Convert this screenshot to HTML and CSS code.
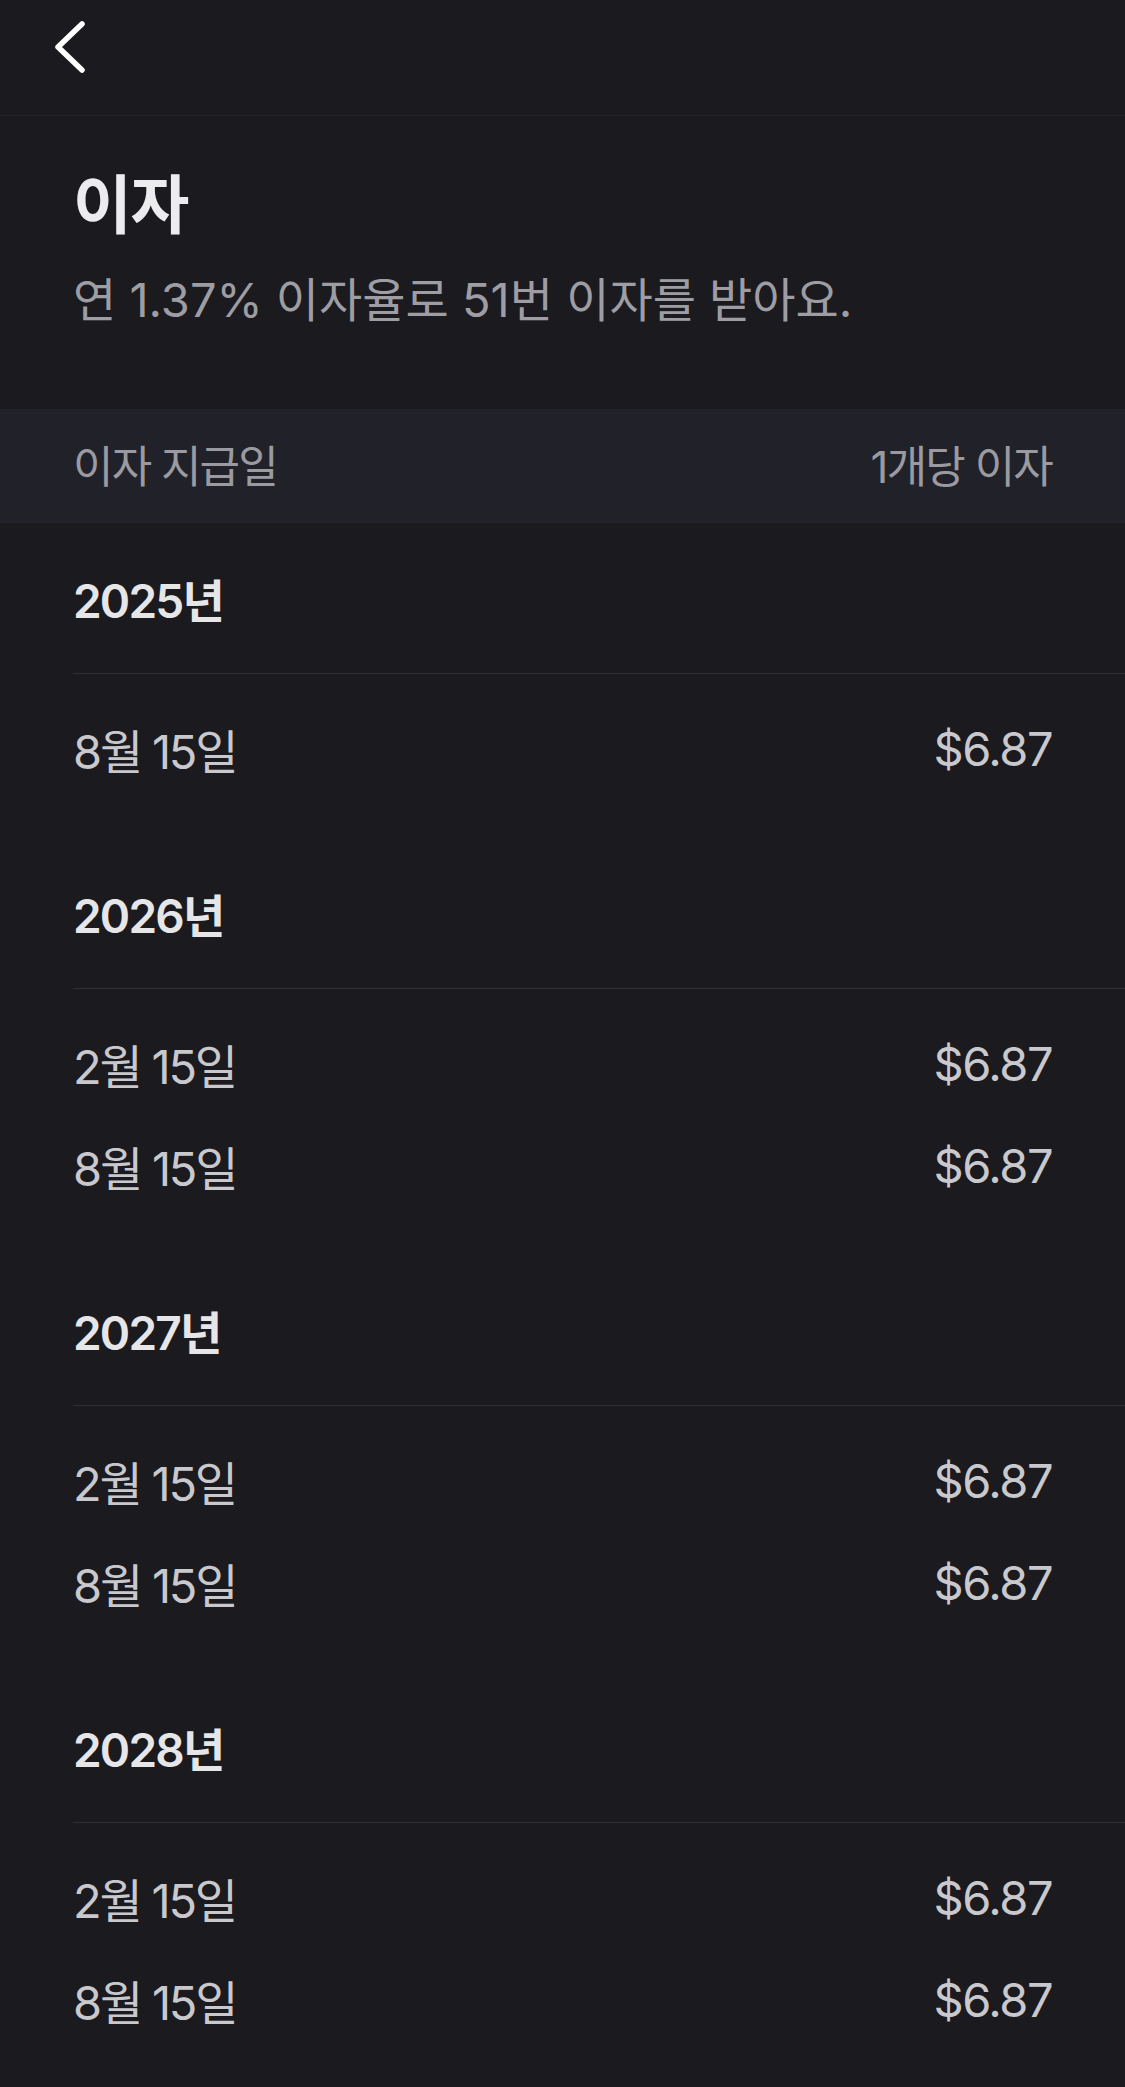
FILE: index.html
```html
<!DOCTYPE html>
<html lang="ko">

<head>
    <meta charset="UTF-8">
    <meta name="viewport" content="width=device-width, initial-scale=1.0">
    <title>이자</title>
    <link rel="stylesheet" href="styles.css">
</head>

<body>
    <header class="topBar">
        <button class="backBtn" aria-label="뒤로">
            <svg width="40" height="60" viewBox="0 0 40 60">
                <path d="M31 7 L7 30 L31 53" fill="none" stroke="#fff" stroke-width="5.5" stroke-linecap="round" stroke-linejoin="round" />
            </svg>
        </button>
    </header>

    <div class="intro">
        <h1 class="title">이자</h1>
        <p class="subtitle">연 1.37% 이자율로 51번 이자를 받아요.</p>
    </div>

    <div class="tableHead">
        <span>이자 지급일</span>
        <span>1개당 이자</span>
    </div>

    <section class="yearBlock">
        <h2 class="year">2025년</h2>
        <ul class="payList">
            <li><span class="date">8월 15일</span><span>$6.87</span></li>
        </ul>
    </section>

    <section class="yearBlock">
        <h2 class="year">2026년</h2>
        <ul class="payList">
            <li><span class="date">2월 15일</span><span>$6.87</span></li>
            <li><span class="date">8월 15일</span><span>$6.87</span></li>
        </ul>
    </section>

    <section class="yearBlock">
        <h2 class="year">2027년</h2>
        <ul class="payList">
            <li><span class="date">2월 15일</span><span>$6.87</span></li>
            <li><span class="date">8월 15일</span><span>$6.87</span></li>
        </ul>
    </section>

    <section class="yearBlock">
        <h2 class="year">2028년</h2>
        <ul class="payList">
            <li><span class="date">2월 15일</span><span>$6.87</span></li>
            <li><span class="date">8월 15일</span><span>$6.87</span></li>
        </ul>
    </section>
</body>

</html>
```

FILE: styles.css
```css
* {
    margin: 0;
    padding: 0;
    box-sizing: border-box;
}

html,
body {
    background-color: #1a1a1f;
}

body {
    font-family: "Inter", "Noto Sans CJK KR", sans-serif;
    color: #e8e8ea;
    width: 1125px;
    overflow: hidden;
}

/* top navigation */
.topBar {
    height: 116px;
    border-bottom: 1px solid #24242a;
    display: flex;
    align-items: flex-start;
    padding: 17px 0 0 51px;
}

.backBtn {
    background: none;
    border: 0;
    display: block;
    cursor: pointer;
}

.backBtn svg {
    display: block;
}

/* title */
.intro {
    padding: 49px 73px 77px;
}

.title {
    font-size: 64px;
    line-height: 80px;
    font-weight: 700;
    color: #ececee;
    letter-spacing: -1.5px;
}

.subtitle {
    margin-top: 23px;
    font-size: 47px;
    line-height: 64px;
    font-weight: 400;
    color: #9d9da3;
    letter-spacing: 0;
}

/* table header */
.tableHead {
    height: 114px;
    background-color: #212229;
    display: flex;
    justify-content: space-between;
    align-items: center;
    padding: 0 73px 4px;
    font-size: 44px;
    color: #9a9aa0;
    letter-spacing: -1.8px;
}

/* year sections */
.yearBlock {
    margin-left: 73px;
    padding-top: 48px;
}

.year {
    font-size: 46px;
    line-height: 60px;
    font-weight: 600;
    color: #e6e6e8;
    letter-spacing: -1.8px;
    padding-bottom: 42px;
    border-bottom: 1px solid #303037;
}

.payList {
    list-style: none;
    padding: 23px 73px 39px 0;
}

.payList li {
    height: 102px;
    display: flex;
    justify-content: space-between;
    align-items: center;
    font-size: 47px;
    color: #c9c9cd;
    letter-spacing: -1.5px;
}

.payList .date {
    letter-spacing: -2.2px;
}
```
